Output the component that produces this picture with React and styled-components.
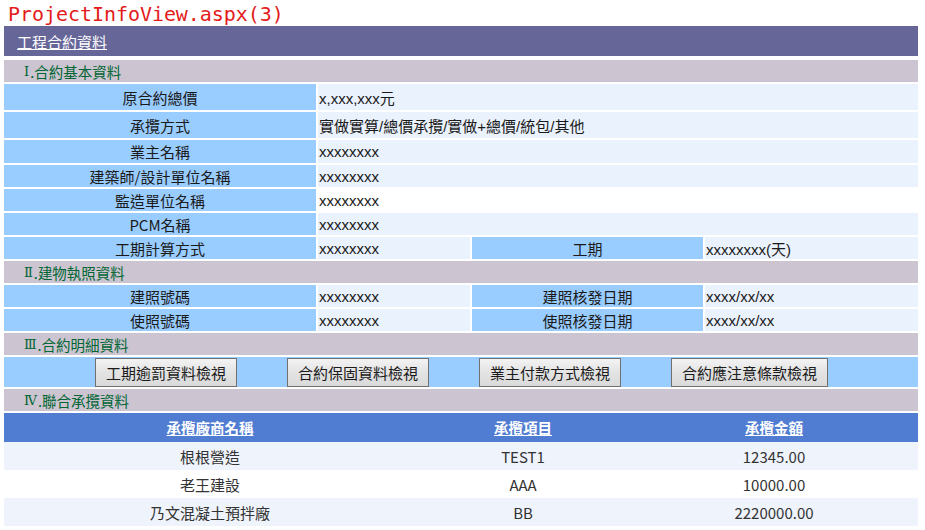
import React from "react";
import styled, { createGlobalStyle } from "styled-components";

const Global = createGlobalStyle`
  html, body { margin: 0; padding: 0; background: #fff; }
  body { font-family: "Liberation Sans", "Noto Sans CJK TC", sans-serif; font-size: 15px; color: #1a1a1a; }
`;

const Page = styled.div`
  width: 914px;
  padding: 0 4px;
`;

const Title = styled.div`
  height: 26px;
  line-height: 28px;
  padding-left: 4px;
  overflow: hidden;
  font-family: "DejaVu Sans Mono", "Liberation Mono", monospace;
  font-size: 20px;
  letter-spacing: -0.05px;
  color: #e31b1b;
  white-space: nowrap;
`;

const HeaderBar = styled.div`
  height: 30px;
  background: #666699;
  display: flex;
  align-items: center;
  padding-left: 13px;
  margin-bottom: 4px;
  color: #fff;
  font-family: "Noto Sans CJK TC", sans-serif;
  font-size: 15px;
  text-decoration: underline;
`;

const Stack = styled.div`
  display: flex;
  flex-direction: column;
  gap: 2px;
`;

const Section = styled.div`
  height: 22px;
  background: #ccc4d0;
  color: #006633;
  display: flex;
  align-items: center;
  padding-left: 20px;
  font-family: "Noto Sans CJK TC", sans-serif;
  font-size: 14.5px;
`;

const Numeral = styled.span`
  font-family: "DejaVu Serif", "Liberation Serif", serif;
  font-size: 13px;
  margin-right: 1px;
`;

const Row = styled.div`
  display: grid;
  grid-template-columns: ${(p) => (p.$split ? "312px 152px 231px 1fr" : "312px 1fr")};
  column-gap: 2px;
  height: ${(p) => p.$h || 22}px;
`;

const Label = styled.div`
  background: #99ccff;
  display: flex;
  align-items: center;
  justify-content: center;
  font-family: "Noto Sans CJK TC", sans-serif;
  font-size: 15px;
  color: #1a1a1a;
`;

const Value = styled.div`
  background: ${(p) => (p.$plain ? "#ffffff" : "#eaf2fd")};
  display: flex;
  align-items: center;
  padding-left: 1px;
  font-size: 15px;
  color: #1a1a1a;
  white-space: nowrap;
`;

const ButtonRow = styled.div`
  height: 30px;
  background: #99ccff;
  display: flex;
  align-items: center;
  gap: 50px;
  padding-left: 91px;
`;

const ActionButton = styled.button`
  height: 29px;
  padding: 0 10px;
  border: 1px solid #707070;
  border-radius: 0;
  background: linear-gradient(#f3f3f3, #e3e3e3 50%, #dadada);
  font-family: "Noto Sans CJK TC", sans-serif;
  font-size: 15px;
  color: #1a1a1a;
  white-space: nowrap;
`;

const Grid = styled.div`
  display: grid;
  grid-template-columns: 412px 214px 1fr;
`;

const HeadCell = styled.div`
  height: 29px;
  background: #507cd1;
  color: #fff;
  font-weight: bold;
  text-decoration: underline;
  display: flex;
  align-items: center;
  justify-content: center;
  font-family: "Noto Sans CJK TC", sans-serif;
  font-size: 14.5px;
`;

const DataCell = styled.div`
  height: 28px;
  background: ${(p) => (p.$alt ? "#ffffff" : "#eff3fb")};
  color: #333;
  display: flex;
  align-items: center;
  justify-content: center;
  font-family: "Noto Sans CJK TC", sans-serif;
  font-size: 15px;
`;

const partners = [
  ["根根營造", "TEST1", "12345.00"],
  ["老王建設", "AAA", "10000.00"],
  ["乃文混凝土預拌廠", "BB", "2220000.00"],
];

const buttons = ["工期逾罰資料檢視", "合約保固資料檢視", "業主付款方式檢視", "合約應注意條款檢視"];

function SectionTitle({ num, children }) {
  return (
    <Section>
      <Numeral>{num}</Numeral>.{children}
    </Section>
  );
}

export default function App() {
  return (
    <Page>
      <Global />
      <Title>ProjectInfoView.aspx(3)</Title>
      <HeaderBar>工程合約資料</HeaderBar>
      <Stack>
        <SectionTitle num="Ⅰ">合約基本資料</SectionTitle>
        <Row $h={26}>
          <Label>原合約總價</Label>
          <Value>x,xxx,xxx元</Value>
        </Row>
        <Row $h={26}>
          <Label>承攬方式</Label>
          <Value>實做實算/總價承攬/實做+總價/統包/其他</Value>
        </Row>
        <Row $h={23}>
          <Label>業主名稱</Label>
          <Value>xxxxxxxx</Value>
        </Row>
        <Row>
          <Label>建築師/設計單位名稱</Label>
          <Value>xxxxxxxx</Value>
        </Row>
        <Row>
          <Label>監造單位名稱</Label>
          <Value $plain>xxxxxxxx</Value>
        </Row>
        <Row>
          <Label>PCM名稱</Label>
          <Value>xxxxxxxx</Value>
        </Row>
        <Row $split>
          <Label>工期計算方式</Label>
          <Value>xxxxxxxx</Value>
          <Label>工期</Label>
          <Value>xxxxxxxx(天)</Value>
        </Row>
        <SectionTitle num="Ⅱ">建物執照資料</SectionTitle>
        <Row $split>
          <Label>建照號碼</Label>
          <Value>xxxxxxxx</Value>
          <Label>建照核發日期</Label>
          <Value>xxxx/xx/xx</Value>
        </Row>
        <Row $split>
          <Label>使照號碼</Label>
          <Value>xxxxxxxx</Value>
          <Label>使照核發日期</Label>
          <Value>xxxx/xx/xx</Value>
        </Row>
        <SectionTitle num="Ⅲ">合約明細資料</SectionTitle>
        <ButtonRow>
          {buttons.map((b) => (
            <ActionButton key={b}>{b}</ActionButton>
          ))}
        </ButtonRow>
        <SectionTitle num="Ⅳ">聯合承攬資料</SectionTitle>
        <Grid>
          <HeadCell>承攬廠商名稱</HeadCell>
          <HeadCell>承攬項目</HeadCell>
          <HeadCell>承攬金額</HeadCell>
          {partners.map((r, i) =>
            r.map((c, j) => (
              <DataCell key={`${i}-${j}`} $alt={i % 2 === 1}>
                {c}
              </DataCell>
            ))
          )}
        </Grid>
      </Stack>
    </Page>
  );
}
